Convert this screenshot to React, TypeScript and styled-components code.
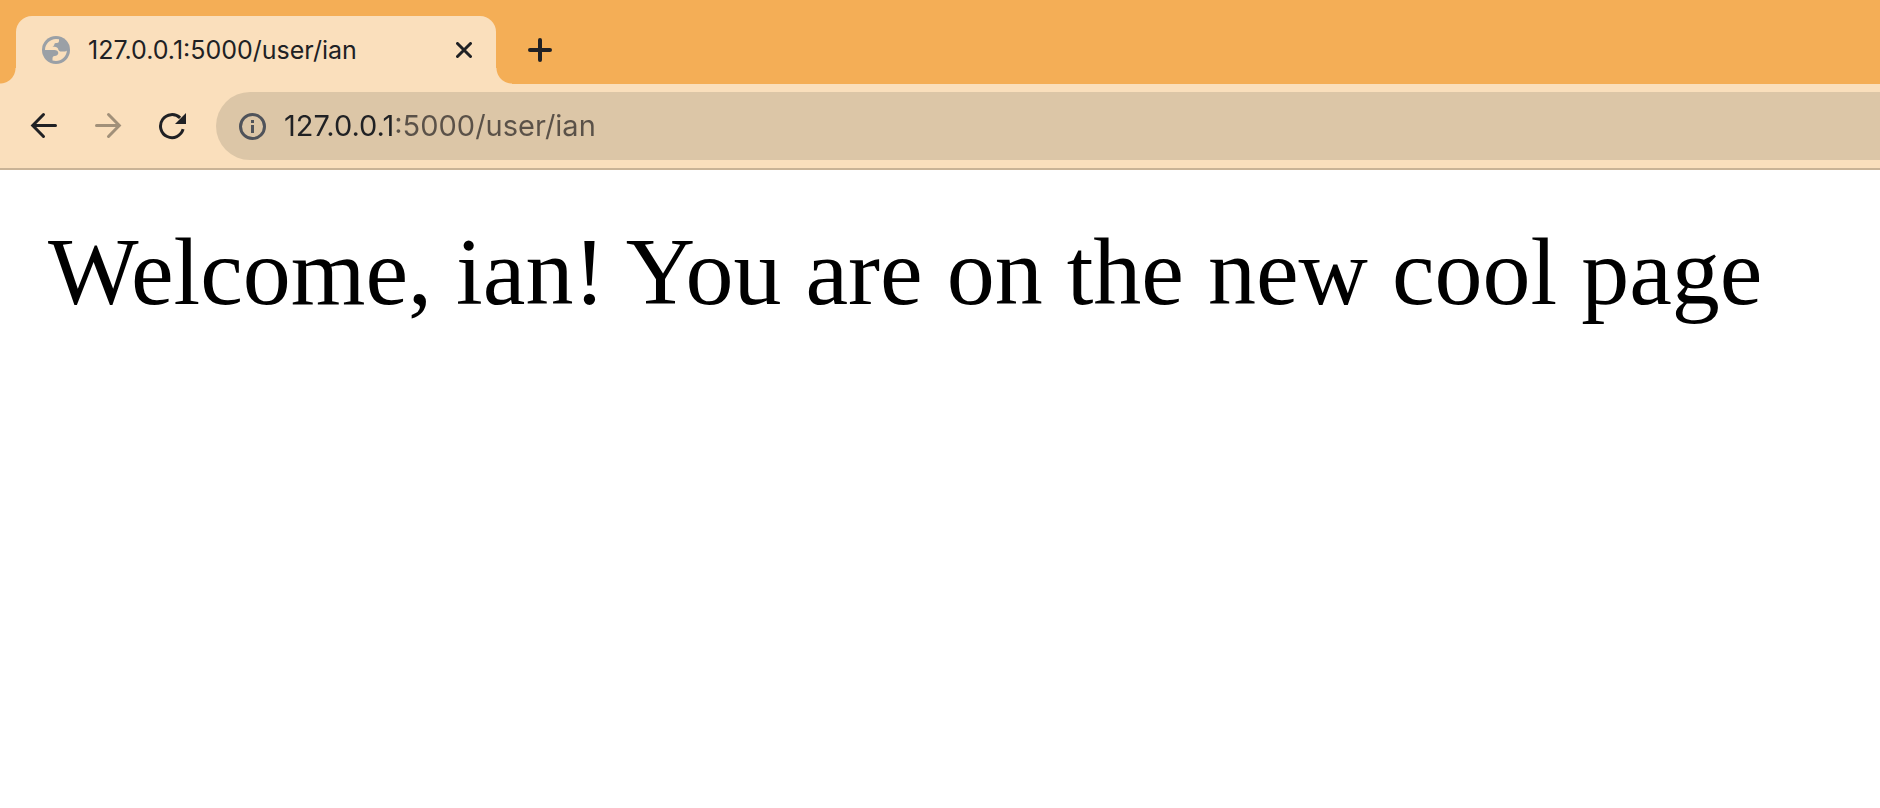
import React from 'react';
import styled, { createGlobalStyle } from 'styled-components';

const ink = '#202124';
const sans = 'Inter, "Liberation Sans", sans-serif';

const GlobalStyle = createGlobalStyle`
  *, *::before, *::after { box-sizing: border-box; }
  body { margin: 0; background: #fff; }
`;

const TabStrip = styled.div`
  display: flex;
  align-items: flex-end;
  height: 84px;
  padding: 0 16px;
  background: #f4ae56;
`;

const Tab = styled.div`
  position: relative;
  display: flex;
  align-items: center;
  width: 480px;
  height: 68px;
  padding: 0 20px 0 26px;
  background: #fadfbc;
  border-radius: 16px 16px 0 0;

  &::before,
  &::after {
    content: '';
    position: absolute;
    bottom: 0;
    width: 16px;
    height: 16px;
  }
  &::before {
    right: 100%;
    background: radial-gradient(circle at 0 0, transparent 15px, #fadfbc 16px);
  }
  &::after {
    left: 100%;
    background: radial-gradient(circle at 100% 0, transparent 15px, #fadfbc 16px);
  }
`;

const TabTitle = styled.span`
  flex: 1;
  margin-left: 18px;
  font: 400 25px/32px ${sans};
  color: ${ink};
  white-space: nowrap;
`;

const IconButton = styled.button<{ $width: number }>`
  display: flex;
  flex: none;
  align-items: center;
  justify-content: center;
  width: ${(p) => p.$width}px;
  height: 48px;
  padding: 0;
  border: 0;
  background: none;
  color: ${ink};

  &:disabled { color: #a19079; }
`;

const NewTabButton = styled(IconButton)`
  height: 68px;
  margin-left: 20px;
`;

const Toolbar = styled.div`
  display: flex;
  align-items: center;
  height: 86px;
  padding: 8px 0 8px 12px;
  background: #fadfbc;
  border-bottom: 2px solid #c9b396;
`;

const AddressBar = styled.label`
  display: flex;
  flex: 1;
  align-items: center;
  height: 68px;
  margin-left: 12px;
  padding-left: 22px;
  background: #dcc6a7;
  border-radius: 34px 0 0 34px;
`;

/* The host is drawn darker than the port and path that follow it. */
const AddressInput = styled.input`
  flex: 1;
  min-width: 0;
  height: 40px;
  margin-left: 18px;
  padding: 0;
  border: 0;
  outline: 0;
  font: 400 29px/40px ${sans};
  color: transparent;
  caret-color: ${ink};
  background: linear-gradient(90deg, ${ink} 110px, #5a5148 110px);
  background-clip: text;
  -webkit-background-clip: text;
`;

const Content = styled.main`
  padding: 48px;
`;

const Message = styled.p`
  margin: 0;
  font: 96px/108px "Liberation Serif", "Times New Roman", serif;
  color: #000;
`;

const Globe = () => (
  <svg width="28" height="28" viewBox="0 0 28 28" aria-hidden="true">
    <circle cx="14" cy="14" r="14" fill="#9aa0a6" />
    <path
      fill="#fadfbc"
      d="M3 14C3 8 8 3 14 3L17 3.300V4.800C17 6.400 16.200 7 15 7H13.800C12.800 7 12.300 7.800 12.300 8.600C12.300 9.600 11.600 10.200 10.500 10.400C13 10.600 15.500 11 16 12.500C16.200 14.500 17.500 15.600 19.500 15.600H22C23.500 15.600 24.200 15.200 24.900 14.500C24.500 20.500 19.500 25 14 25L10.500 24.400V22.500C10.500 21 11.200 20 12.500 20C15 20 16.300 18.500 16.300 17C16.300 15 14.500 14 12.500 14Z"
    />
  </svg>
);

const BackArrow = () => (
  <svg width="28" height="28" viewBox="0 0 28 28" fill="none" stroke="currentColor" strokeWidth="3" strokeLinecap="round" aria-hidden="true">
    <path d="M25.500 13.500H3M13.500 2.500L2.700 13.500L13.500 24.500" />
  </svg>
);

const ForwardArrow = () => (
  <svg width="28" height="28" viewBox="0 0 28 28" fill="none" stroke="currentColor" strokeWidth="3" strokeLinecap="round" aria-hidden="true">
    <path d="M2.500 13.500H25M14.500 2.500L25.300 13.500L14.500 24.500" />
  </svg>
);

const Reload = () => (
  <svg width="28" height="28" viewBox="0 0 28 28" aria-hidden="true">
    <path d="M25.100 17.200A11.500 11.500 0 1 1 22.100 5.900" fill="none" stroke="currentColor" strokeWidth="3" />
    <path d="M28 1V12H17Z" fill="currentColor" />
  </svg>
);

const Info = () => (
  <svg width="28" height="28" viewBox="0 0 28 28" aria-hidden="true">
    <circle cx="14.500" cy="14.500" r="12" fill="none" stroke="#50535a" strokeWidth="3" />
    <path d="M13 8H16V11H13ZM13 13H16V21H13Z" fill="#50535a" />
  </svg>
);

const Close = () => (
  <svg width="16" height="16" viewBox="0 0 16 16" fill="none" stroke="currentColor" strokeWidth="3" strokeLinecap="round" aria-hidden="true">
    <path d="M1.500 1.500L14.500 14.500M14.500 1.500L1.500 14.500" />
  </svg>
);

const Plus = () => (
  <svg width="24" height="24" viewBox="0 0 24 24" fill="none" stroke="currentColor" strokeWidth="4" strokeLinecap="round" aria-hidden="true">
    <path d="M2 12H22M12 2V22" />
  </svg>
);

export default function App() {
  return (
    <>
      <GlobalStyle />
      <header>
        <TabStrip>
          <Tab>
            <Globe />
            <TabTitle>127.0.0.1:5000/user/ian</TabTitle>
            <IconButton $width={24} type="button" aria-label="Close tab"><Close /></IconButton>
          </Tab>
          <NewTabButton $width={48} type="button" aria-label="New tab"><Plus /></NewTabButton>
        </TabStrip>
        <Toolbar>
          <IconButton $width={64} type="button" aria-label="Back"><BackArrow /></IconButton>
          <IconButton $width={64} type="button" aria-label="Forward" disabled><ForwardArrow /></IconButton>
          <IconButton $width={64} type="button" aria-label="Reload"><Reload /></IconButton>
          <AddressBar>
            <Info />
            <AddressInput aria-label="Address" defaultValue="127.0.0.1:5000/user/ian" spellCheck={false} />
          </AddressBar>
        </Toolbar>
      </header>
      <Content>
        <Message>Welcome, ian! You are on the new cool page</Message>
      </Content>
    </>
  );
}
